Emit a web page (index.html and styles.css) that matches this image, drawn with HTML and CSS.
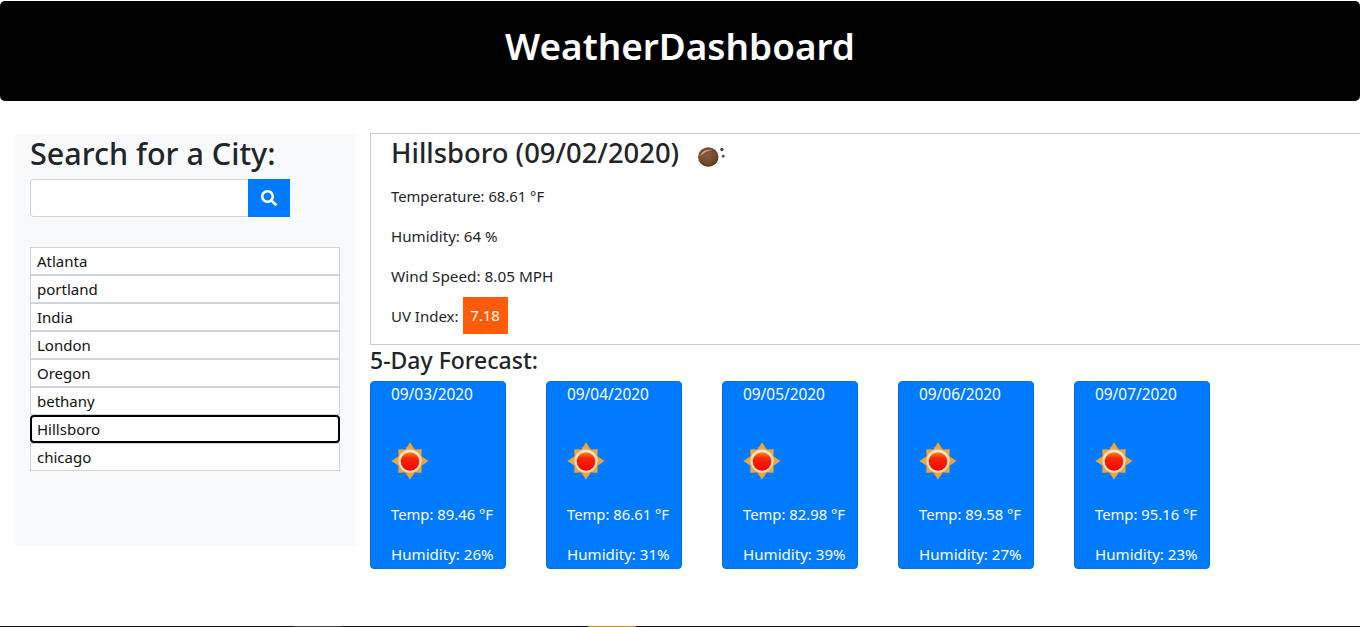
FILE: index.html
```html
<!DOCTYPE html>
<html lang="en">
<head>
<meta charset="utf-8">
<title>WeatherDashboard</title>
<link rel="stylesheet" href="styles.css">
</head>
<body>
<svg class="defs" width="0" height="0" aria-hidden="true">
  <defs>
    <linearGradient id="sunCore" x1="0" y1="0" x2="0" y2="1">
      <stop offset="0" stop-color="#f98a18"/>
      <stop offset=".3" stop-color="#fb2a06"/>
      <stop offset="1" stop-color="#f50000"/>
    </linearGradient>
    <radialGradient id="ball" cx="45%" cy="40%" r="62%">
      <stop offset="0" stop-color="#8a5a3c"/>
      <stop offset=".7" stop-color="#75482c"/>
      <stop offset="1" stop-color="#54331d"/>
    </radialGradient>
    <filter id="soft" x="-10%" y="-10%" width="120%" height="120%">
      <feGaussianBlur stdDeviation="0.45"/>
    </filter>
    <symbol id="sun" viewBox="0 0 40 40">
      <g filter="url(#soft)">
        <path fill="#efa440" d="M20 1.500L24.800 8.450 31.700 8.300 31.550 15.200 38.500 20 31.550 24.800 31.700 31.700 24.800 31.550 20 38.500 15.200 31.550 8.300 31.700 8.450 24.800 1.500 20 8.450 15.200 8.300 8.300 15.200 8.450z"/>
        <circle cx="20" cy="20" r="11.500" fill="#fbe4c2"/>
        <circle cx="20" cy="20.500" r="9.300" fill="url(#sunCore)"/>
      </g>
    </symbol>
  </defs>
</svg>
<div class="page">
  <header class="banner"><h1>WeatherDashboard</h1></header>
  <div class="content">
    <aside class="sidebar">
      <h2>Search for a City:</h2>
      <form class="search">
        <input class="search-input" type="text" aria-label="City">
        <button class="search-btn" type="button" aria-label="Search">
          <svg class="search-icon" viewBox="0 0 512 512"><path fill="#fff" d="M505 442.700L405.300 343c-4.500-4.500-10.600-7-17-7H372c27.600-35.300 44-79.700 44-128C416 93.100 322.900 0 208 0S0 93.100 0 208s93.100 208 208 208c48.300 0 92.700-16.400 128-44v16.300c0 6.400 2.500 12.500 7 17l99.700 99.700c9.400 9.400 24.600 9.400 33.900 0l28.300-28.300c9.400-9.400 9.400-24.600.1-34zM208 336c-70.700 0-128-57.200-128-128 0-70.700 57.200-128 128-128 70.700 0 128 57.200 128 128 0 70.700-57.200 128-128 128z"/></svg>
        </button>
      </form>
      <ul class="cities">
        <li class="city">Atlanta</li>
        <li class="city">portland</li>
        <li class="city">India</li>
        <li class="city">London</li>
        <li class="city">Oregon</li>
        <li class="city">bethany</li>
        <li class="city city-active">Hillsboro</li>
        <li class="city">chicago</li>
      </ul>
    </aside>
    <main class="main">
      <section class="current">
        <h3 class="current-title">Hillsboro (09/02/2020)
          <svg class="moon" viewBox="0 0 50 50">
            <g filter="url(#soft)">
              <ellipse cx="21" cy="25" rx="15" ry="14.500" fill="url(#ball)"/>
              <path d="M9 24c2-7 10-11 18-9-8 0-13 4-18 9z" fill="#d2b09a"/>
              <circle cx="41" cy="14" r="2.500" fill="#4a4a4a"/>
              <circle cx="43" cy="24" r="2.200" fill="#555"/>
            </g>
          </svg>
        </h3>
        <p class="stat stat-temp">Temperature: 68.61 °F</p>
        <p class="stat stat-hum">Humidity: 64 %</p>
        <p class="stat stat-wind">Wind Speed: 8.05 MPH</p>
        <p class="stat stat-uv">UV Index: <span class="uv">7.18</span></p>
      </section>
      <h4 class="forecast-title">5-Day Forecast:</h4>
      <div class="forecast">
        <article class="card">
          <div class="card-date">09/03/2020</div>
          <svg class="sun"><use href="#sun"/></svg>
          <p class="card-line card-temp">Temp: 89.46 °F</p>
          <p class="card-line card-hum">Humidity: 26%</p>
        </article>
        <article class="card">
          <div class="card-date">09/04/2020</div>
          <svg class="sun"><use href="#sun"/></svg>
          <p class="card-line card-temp">Temp: 86.61 °F</p>
          <p class="card-line card-hum">Humidity: 31%</p>
        </article>
        <article class="card">
          <div class="card-date">09/05/2020</div>
          <svg class="sun"><use href="#sun"/></svg>
          <p class="card-line card-temp">Temp: 82.98 °F</p>
          <p class="card-line card-hum">Humidity: 39%</p>
        </article>
        <article class="card">
          <div class="card-date">09/06/2020</div>
          <svg class="sun"><use href="#sun"/></svg>
          <p class="card-line card-temp">Temp: 89.58 °F</p>
          <p class="card-line card-hum">Humidity: 27%</p>
        </article>
        <article class="card">
          <div class="card-date">09/07/2020</div>
          <svg class="sun"><use href="#sun"/></svg>
          <p class="card-line card-temp">Temp: 95.16 °F</p>
          <p class="card-line card-hum">Humidity: 23%</p>
        </article>
      </div>
    </main>
  </div>
  <div class="bottom-edge">
    <span class="edge-grey"></span>
    <span class="edge-orange"></span>
  </div>
</div>
</body>
</html>
```
FILE: styles.css
```css
* { box-sizing: border-box; }
html, body { margin: 0; height: 100%; overflow: hidden; }
body {
  font-family: "Noto Sans", "Open Sans", sans-serif;
  font-size: 16px;
  line-height: 24px;
  color: #212529;
  background: #fff;
}
.defs { display: block; height: 0; }
h1, h2, h3, h4, p, ul { margin: 0; padding: 0; }
.page { height: 627px; display: flex; flex-direction: column; }

.banner {
  height: 100px;
  margin-top: 1px;
  background: #000;
  border-radius: 5px;
  display: flex;
  align-items: center;
  justify-content: center;
  flex: none;
}
.banner h1 {
  color: #fff;
  font-size: 36.900px;
  font-weight: 600;
  line-height: 48px;
  margin-top: -10px;
}

.content {
  display: flex;
  align-items: flex-start;
  gap: 15px;
  padding: 32px 0 0 15px;
  flex: 1;
}

.sidebar {
  width: 340px;
  height: 412px;
  margin-top: 1px;
  background: #f8f9fa;
  padding: 0 15px;
  flex: none;
}
.sidebar h2 {
  font-size: 30.500px;
  font-weight: 500;
  line-height: 38px;
  height: 45px;
}
.search { display: flex; width: 260px; height: 38px; }
.search-input {
  width: 218px;
  height: 38px;
  border: 1px solid #ced4da;
  border-right: 0;
  border-radius: 4px 0 0 4px;
  background: #fff;
  padding: 6px 12px;
}
.search-btn {
  width: 42px;
  height: 38px;
  border: 0;
  padding: 0;
  background: #007bff;
  display: flex;
  align-items: center;
  justify-content: center;
}
.search-icon { width: 16px; height: 16px; }

.cities { list-style: none; margin-top: 30px; width: 310px; }
.city {
  height: 28px;
  line-height: 26px;
  padding: 0 6px;
  background: #fff;
  border: 1px solid #ced4da;
  color: #111;
  font-size: 15px;
}
.city-active {
  border: 2px solid #000;
  border-radius: 4px;
  line-height: 24px;
  padding: 0 5px;
}

.main { flex: 1; min-width: 0; margin-right: -10px; }
.current {
  height: 212px;
  border: 1px solid #ccc;
  padding: 0 20px;
}
.current-title {
  font-size: 27.400px;
  font-weight: 500;
  line-height: 38px;
  height: 42px;
  display: flex;
  align-items: flex-start;
  gap: 15px;
}
.moon { width: 34px; height: 34px; margin-top: 6px; }
.stat { height: 40px; font-size: 15px; line-height: 40px; }
.stat-temp { font-size: 14.800px; }
.stat-hum { font-size: 15.100px; }
.stat-wind { font-size: 15.300px; }
.stat-uv { display: flex; align-items: flex-start; gap: 4px; }
.uv {
  background: #ff5c0a;
  color: #fff;
  width: 45px;
  height: 37px;
  margin-top: 1px;
  line-height: 37px;
  text-align: center;
}

.forecast-title {
  font-size: 23px;
  font-weight: 500;
  line-height: 31px;
  height: 36px;
}
.forecast { display: flex; gap: 40px; }
.card {
  width: 136px;
  height: 188px;
  background: #007bff;
  border: 1px solid #0a6fdc;
  border-radius: 4px;
  color: #fff;
  padding: 0 0 0 20px;
  font-size: 15px;
  white-space: nowrap;
}
.card-date { line-height: 24px; height: 37px; margin-top: 1px; font-size: 15.400px; }
.sun { display: block; width: 40px; height: 40px; margin: 21px 0 0 -1px; }
.card-line { height: 40px; line-height: 40px; }
.card-temp { margin-top: 13px; font-size: 14.800px; }
.card-hum { font-size: 15.100px; }

.bottom-edge {
  height: 1px;
  flex: none;
  background: #0a0f14;
  display: flex;
  padding-left: 293px;
}
.edge-grey { width: 49px; background: #3d4449; }
.edge-orange { width: 48px; margin-left: 246px; background: #c8843c; }
```
